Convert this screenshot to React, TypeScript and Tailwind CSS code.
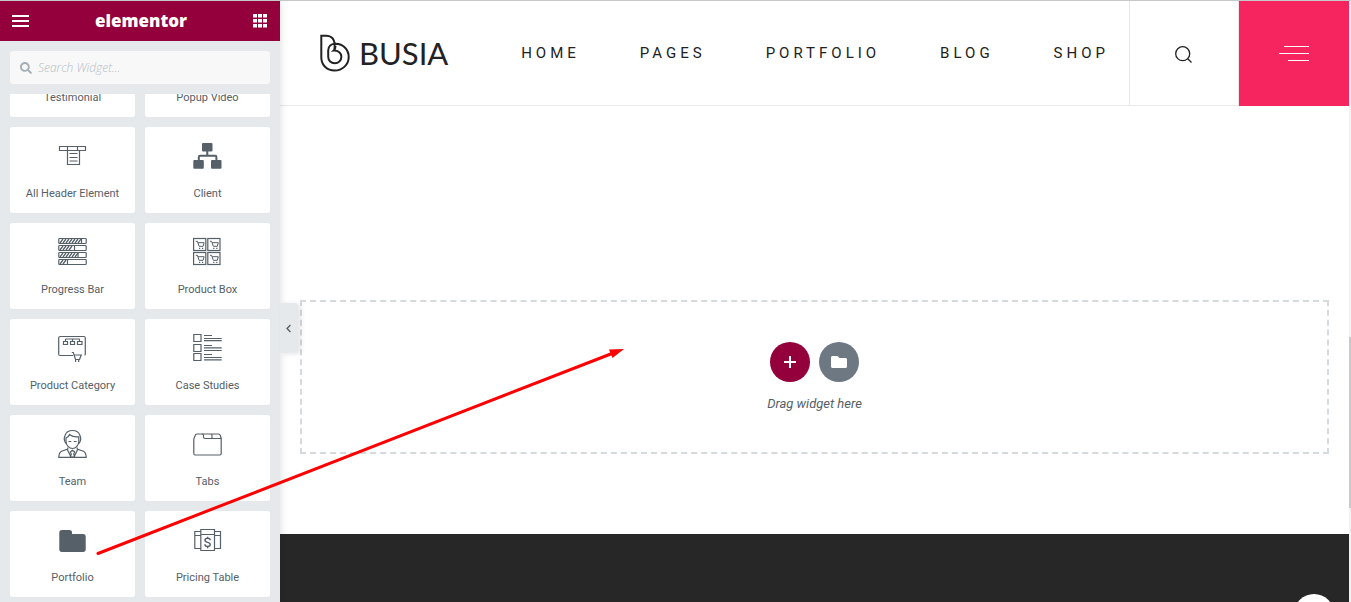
import type { ReactNode } from "react";
import { FaSearch, FaChevronLeft, FaFolder, FaQuoteRight, FaPlay } from "react-icons/fa";

const GREY = "#556068";

function Icon({ children }: { children: ReactNode }) {
  return (
    <svg width="29" height="29" viewBox="0 0 29 29" fill="none" stroke={GREY} strokeWidth="1.2" aria-hidden="true">
      {children}
    </svg>
  );
}

function HeaderElementIcon() {
  return (
    <Icon>
      <path d="M1.5 5.5h26v4h-26zM9.5 5.5v4M19.5 5.5v4M9.5 9.5v14h12v-14M11.5 12.5h8M11.5 16.5h8M11.5 20h8" />
    </Icon>
  );
}

function ClientIcon() {
  return (
    <Icon>
      <g fill={GREY} stroke="none">
        <rect x="9" y="2" width="10.5" height="8.5" rx="1" />
        <rect x="0.3" y="19" width="10.5" height="8.7" rx="1" />
        <rect x="18" y="19" width="10.5" height="8.7" rx="1" />
      </g>
      <path strokeWidth="2" d="M14.3 10v5M5.8 20v-4q0-1.2 1.2-1.2h15.2q1.2 0 1.2 1.2v4" />
    </Icon>
  );
}

function ProgressIcon() {
  const bars = [
    { y: 1.5, end: 23.5 },
    { y: 8.5, end: 16.5 },
    { y: 15.5, end: 20 },
    { y: 22.5, end: 9.5 },
  ];
  return (
    <Icon>
      {bars.map(({ y, end }) => (
        <g key={y}>
          <rect x="0.8" y={y} width="27.4" height="5" rx="0.8" />
          <path d={`M${end} ${y}v5`} />
          {[2, 5, 8, 11, 14, 17, 20]
            .filter((x) => x + 2.5 < end)
            .map((x) => (
              <path key={x} strokeWidth="1.3" d={`M${x} ${y + 4.5}l3-4`} />
            ))}
        </g>
      ))}
    </Icon>
  );
}

function ProductBoxIcon() {
  const cells = [
    [0.6, 1.5],
    [14.8, 1.5],
    [0.6, 15.5],
    [14.8, 15.5],
  ];
  return (
    <Icon>
      {cells.map(([x, y]) => (
        <g key={`${x}-${y}`} transform={`translate(${x} ${y})`}>
          <rect width="12.2" height="12" />
          <path strokeWidth="1" d="M2.2 2.8h1.6l1.7 5h4l1-3.6H4.4" />
          <path strokeWidth="1.2" d="M5.4 9.9h1.2M8.4 9.9h1.2" />
        </g>
      ))}
    </Icon>
  );
}

function ProductCategoryIcon() {
  return (
    <Icon>
      <path d="M15 22.5H2.2q-1.5 0-1.5-1.5V5q0-1.5 1.5-1.5h23.600q1.5 0 1.5 1.500v16q0 1-.8 1.300" />
      <path d="M5.500 8.500h4v3h-4zM12.500 8.500h4v3h-4zM19.500 8.500h4.500v3h-4.500zM7.500 8.500v-2q0-.5.5-.5h13q.5 0 .5.500v2M14.500 6v2.500" />
      <path d="M13.800 19.500h1.500l2.200 7h4l1.800-4.500h-7" />
      <path d="M17.600 27v2M20.700 27v2" />
    </Icon>
  );
}

function CaseStudiesIcon() {
  return (
    <Icon>
      <path d="M.8 1.500h7.200v7H.8zM.8 11.500h7.200v7H.8zM.8 20.500h7.200v7H.8z" />
      <path d="M11 2.500h8M11 5.500h17.700M11 7.600h17.700M11 12.500h8M11 14.900h17.700M11 17.500h17.700M11 21.500h8M11 24.500h17.700M11 26.800h17.700" />
    </Icon>
  );
}

function TeamIcon() {
  return (
    <Icon>
      <path d="M8.200 14.500C6.300 12.500 6 9 7 6.500 8.200 3 11 1.500 14.500 1.500S20.800 3 22 6.500c1 2.500.7 6-1.200 8" />
      <path d="M8 12.500v-3.500q2.500-.5 3.500-3.500 3.500 2.800 9.300 2.300v4.700c0 3.500-3 7-6.300 7s-6.500-3.500-6.500-7z" />
      <path d="M10.500 12.500h2.800M15.800 12.500h2.800" />
      <path d="M9.800 18.500v1.500L3.500 22.300Q1 23.500.8 28.300h27.400q-.2-4.800-2.700-6L19.200 20v-1.500" />
      <path d="M9.300 20.500l3.700 7.500M19.700 20.500l-3.700 7.500M12.300 23l2.200-1.700 2.200 1.700-1 2 1 3h-4.400l1-3z" />
    </Icon>
  );
}

function TabsIcon() {
  return (
    <Icon>
      <path d="M2 7L.8 10v14.500q0 1.500 1.500 1.500h24.400q1.500 0 1.500-1.500V9.500H12q-1.500 0-1.500-1.500V6.500q0-1.500-1.500-1.500H4Q2.500 5 2 7z" />
      <path d="M9 5h8.500q1.500 0 1.500 1.500v3M17.500 5h8q1.500 0 1.800 1.500l.9 3" />
    </Icon>
  );
}

function PortfolioIcon() {
  return (
    <Icon>
      <path
        fill={GREY}
        stroke="none"
        d="M4 5h7.500Q14 5 14 7.500V9h11q2.700 0 2.700 2.700v12.600q0 2.700-2.700 2.700H4q-2.700 0-2.700-2.700V7.700Q1.300 5 4 5z"
      />
    </Icon>
  );
}

function PricingIcon() {
  return (
    <Icon>
      <path d="M7.800 4.500h13.700v21H7.800zM7.800 9.500h13.700M7.800 6.500h-6v17h6M1.800 10.500h6M21.500 6.500h6v17h-6M21.500 10.500h6" />
      <path
        strokeWidth="1.400"
        d="M17.200 15.300c0-1.500-1.200-2-2.600-2s-2.600.7-2.600 2c0 3 5.200 1.200 5.200 4.200 0 1.300-1.200 2-2.600 2s-2.700-.6-2.700-2.200M14.600 11.800v1.500M14.600 21.500v1.700"
      />
    </Icon>
  );
}

const widgets: { label: string; icon: ReactNode }[] = [
  { label: "Testimonial", icon: <FaQuoteRight size={26} /> },
  { label: "Popup Video", icon: <FaPlay size={26} /> },
  { label: "All Header Element", icon: <HeaderElementIcon /> },
  { label: "Client", icon: <ClientIcon /> },
  { label: "Progress Bar", icon: <ProgressIcon /> },
  { label: "Product Box", icon: <ProductBoxIcon /> },
  { label: "Product Category", icon: <ProductCategoryIcon /> },
  { label: "Case Studies", icon: <CaseStudiesIcon /> },
  { label: "Team", icon: <TeamIcon /> },
  { label: "Tabs", icon: <TabsIcon /> },
  { label: "Portfolio", icon: <PortfolioIcon /> },
  { label: "Pricing Table", icon: <PricingIcon /> },
];

function Sidebar() {
  return (
    <aside className="relative z-10 flex w-[280px] shrink-0 flex-col bg-[#e6e9ec] shadow-[0_0_8px_rgba(0,0,0,0.15)]">
      <header className="flex h-10 shrink-0 items-center justify-between bg-[#93003c] px-3 text-white">
        <button type="button" aria-label="Menu">
          <svg width="17" height="12" viewBox="0 0 17 12" fill="#fff">
            <path d="M0 0h17v2H0zM0 5h17v2H0zM0 10h17v2H0z" />
          </svg>
        </button>
        <span className="font-['Open_Sans'] text-[17px] leading-5 font-extrabold">elementor</span>
        <button type="button" aria-label="Widgets panel">
          <svg width="15" height="14" viewBox="0 0 15 14" fill="#fff">
            <path d="M0 0h4v3.500H0zM5 0h4v3.500H5zM10 0h4v3.500h-4zM0 5h4v3.500H0zM5 5h4v3.500H5zM10 5h4v3.500h-4zM0 10h4v3.500H0zM5 10h4v3.500H5zM10 10h4v3.500h-4z" />
          </svg>
        </button>
      </header>
      <div className="p-2.5">
        <label className="flex h-[33px] items-center gap-1.5 rounded-[3px] bg-[#f8f8f8] px-2.5">
          <FaSearch size={12} color="#a4afb7" aria-hidden="true" />
          <input
            type="text"
            aria-label="Search Widget"
            placeholder="Search Widget..."
            className="min-w-0 flex-1 bg-transparent font-['Open_Sans'] text-[12px] font-light italic outline-none placeholder:text-[#b4bdc6]"
          />
        </label>
      </div>
      <div className="min-h-0 flex-1 overflow-hidden px-2.5">
        <div className="-mt-[63px] grid grid-cols-2 gap-2.5">
          {widgets.map((w) => (
            <button
              key={w.label}
              type="button"
              className="flex h-[86px] flex-col items-center rounded-[3px] bg-white pt-3.5 text-[#556068]"
            >
              <span className="flex h-[29px] items-center">{w.icon}</span>
              <span className="mt-4 text-[11px] leading-4">{w.label}</span>
            </button>
          ))}
        </div>
      </div>
      <button
        type="button"
        aria-label="Collapse panel"
        className="absolute top-[302px] left-full flex h-[50px] w-[18px] items-center justify-center rounded-r-[3px] bg-[#e6e9ec] pr-0.5 text-[#556068] shadow-[3px_1px_5px_rgba(0,0,0,0.1)]"
      >
        <FaChevronLeft size={9} />
      </button>
    </aside>
  );
}

function SiteHeader() {
  return (
    <header className="flex h-[105px] shrink-0 bg-white text-[#222]">
      <div className="flex flex-1 items-center justify-between border-b border-[#e9e9e9] pr-5 pl-10">
        <a href="#" className="flex items-center gap-2">
          <svg width="31" height="38" viewBox="0 0 31 38" fill="none" stroke="#222" strokeWidth="2" aria-hidden="true">
            <path d="M14.300 16.500C15.500 8 14 2.200 6.500 1.800H1.300V23.500C1.300 31.500 7.500 36.600 14.500 36.600c8 0 14.200-6 14.200-13.600 0-7-5.200-13.200-13.200-13.200-4.200 0-7.300 2.500-7.300 6.700v6.300c0 4 3 6.500 6.500 6.500 4 0 6.700-3 6.700-6.500 0-3.600-3-6.300-7.700-6.200 1-.8 1.800-2.400 1.800-4.500" />
          </svg>
          <span className="font-['Lato'] text-[31px] leading-9">BUSIA</span>
        </a>
        <nav className="flex gap-[60px] text-[15px] leading-6 tracking-[4px]">
          <a href="#">HOME</a>
          <a href="#">PAGES</a>
          <a href="#">PORTFOLIO</a>
          <a href="#">BLOG</a>
          <a href="#">SHOP</a>
        </nav>
      </div>
      <button
        type="button"
        aria-label="Search"
        className="flex w-[110px] items-center justify-center border-x border-b border-[#e9e9e9] pt-0.5 pr-0.5"
      >
        <svg width="17" height="17" viewBox="0 0 17 17" fill="none" stroke="#222" strokeWidth="1.300">
          <circle cx="7.700" cy="7.700" r="7" />
          <path d="M12.500 12.500l4 4" />
        </svg>
      </button>
      <button
        type="button"
        aria-label="Open side menu"
        className="flex w-[110px] flex-col items-end justify-center gap-1.5 bg-[#f6255f] pr-10"
      >
        <span className="h-px w-[25px] bg-white" />
        <span className="h-px w-[30px] bg-white" />
        <span className="h-px w-[21px] bg-white" />
      </button>
    </header>
  );
}

function DropZone() {
  return (
    <section className="mx-5 mt-[194px] mb-20 flex h-[154px] shrink-0 flex-col items-center justify-center border-2 border-dashed border-[#d5dadf] pt-0.5">
      <div className="flex gap-[9px]">
        <button
          type="button"
          aria-label="Add new section"
          className="flex size-10 items-center justify-center rounded-full bg-[#93003c]"
        >
          <svg width="12" height="12" viewBox="0 0 12 12" fill="#fff">
            <path d="M5 0h2v5h5v2H7v5H5V7H0V5h5z" />
          </svg>
        </button>
        <button
          type="button"
          aria-label="Add template"
          className="flex size-10 items-center justify-center rounded-full bg-[#6d7882] text-white"
        >
          <FaFolder size={16} />
        </button>
      </div>
      <p className="mt-3 text-[13px] leading-5 text-[#556068] italic">Drag widget here</p>
    </section>
  );
}

export default function App() {
  return (
    <div className="relative flex h-screen overflow-hidden border-t border-[#c8c8c8] bg-white font-['Roboto',sans-serif]">
      <Sidebar />
      <main className="relative flex min-w-0 flex-1 flex-col overflow-hidden">
        <SiteHeader />
        <DropZone />
        <footer className="flex-1 bg-[#272727]" />
        <a
          href="#"
          aria-label="Back to top"
          className="absolute right-[15px] -bottom-8 size-10 rounded-full bg-white"
        />
      </main>
      <div className="flex w-0.5 shrink-0 flex-col bg-[#f1f1f1]">
        <div className="mt-[336px] h-[171px] bg-[#c9c9c9]" />
      </div>
      <svg className="pointer-events-none absolute top-0 left-0 z-20" width="640" height="600" viewBox="0 1 640 600" aria-hidden="true">
        <path d="M98 553.500L612 353.500" stroke="#f00" strokeWidth="3" strokeLinecap="round" />
        <path d="M624 349l-11.500 9-3.500-8.500z" fill="#f00" />
      </svg>
    </div>
  );
}
